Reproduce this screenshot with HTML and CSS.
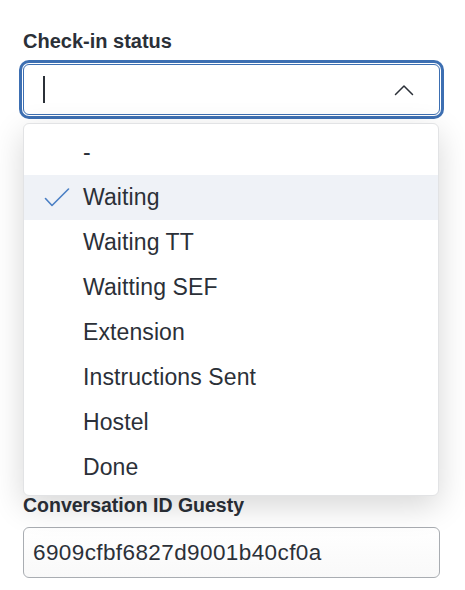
FILE: index.html
```html
<!DOCTYPE html>
<html>
<head>
<meta charset="utf-8">
<link rel="stylesheet" href="styles.css">
</head>
<body>
<div class="page">
  <div class="field">
    <div class="label label-first">Check-in status</div>
    <div class="select-wrap">
      <div class="select">
        <span class="caret"></span>
        <svg class="chevron" width="20" height="12" viewBox="0 0 20 12"><path d="M1.5 10.5 L10 2 L18.5 10.5" fill="none" stroke="#2b3038" stroke-width="1.5" stroke-linecap="round" stroke-linejoin="round"/></svg>
      </div>
      <ul class="menu">
        <li class="item">-</li>
        <li class="item selected">
          <svg class="check" width="26" height="20" viewBox="0 0 26 20"><path d="M1.5 10.5 L8 17.5 L24.5 1" fill="none" stroke="#4a7fc4" stroke-width="1.6" stroke-linecap="round" stroke-linejoin="round"/></svg>
          Waiting</li>
        <li class="item">Waiting TT</li>
        <li class="item">Waitting SEF</li>
        <li class="item">Extension</li>
        <li class="item">Instructions Sent</li>
        <li class="item">Hostel</li>
        <li class="item">Done</li>
      </ul>
    </div>
  </div>
  <div class="field field-2">
    <div class="label">Conversation ID Guesty</div>
    <div class="input">6909cfbf6827d9001b40cf0a</div>
  </div>
</div>
</body>
</html>
```

FILE: styles.css
```css
html, body {
  margin: 0;
  padding: 0;
  background: #ffffff;
}
body {
  font-family: "Liberation Sans", Arial, sans-serif;
  color: #2b3038;
}
.page {
  padding: 30px 0 0 23px;
  width: 417px;
}
.label {
  font-size: 19.5px;
  font-weight: 700;
  line-height: 22px;
  color: #2b3038;
}
.label-first {
  font-size: 20px;
}
.select-wrap {
  position: relative;
  margin-top: 12px;
}
.select {
  height: 51px;
  box-sizing: border-box;
  border: 1px solid #3d6fb2;
  border-radius: 6px;
  box-shadow: 0 0 0 1px #ffffff, 0 0 0 4px #3d6fb2;
  display: flex;
  align-items: center;
  justify-content: space-between;
  padding: 0 25px 0 19px;
  background: #fff;
}
.caret {
  width: 2px;
  height: 27px;
  background: #2b3038;
}
.chevron {
  display: block;
}
.menu {
  position: absolute;
  top: 59px;
  left: 0;
  width: 416px;
  box-sizing: border-box;
  margin: 0;
  padding: 6px 0 5px;
  list-style: none;
  background: #ffffff;
  border: 1px solid #e2e3e5;
  border-radius: 6px;
  box-shadow: 0 10px 32px rgba(0, 0, 0, 0.16);
  z-index: 2;
}
.item {
  position: relative;
  height: 45px;
  display: flex;
  align-items: center;
  padding-left: 59px;
  font-size: 23px;
  letter-spacing: 0.1px;
  color: #2b3038;
}
.item.selected {
  background: #eff2f7;
}
.check {
  position: absolute;
  left: 20px;
  top: 13px;
}
.field-2 {
  margin-top: 379px;
}
.field-2 .input {
  margin-top: 11px;
  height: 51px;
  box-sizing: border-box;
  border: 1px solid #a9adb2;
  border-radius: 6px;
  background: linear-gradient(#ffffff, #f9f9f9);
  display: flex;
  align-items: center;
  padding-left: 9px;
  font-size: 22.5px;
  letter-spacing: 0.4px;
  color: #2b3038;
}
```
